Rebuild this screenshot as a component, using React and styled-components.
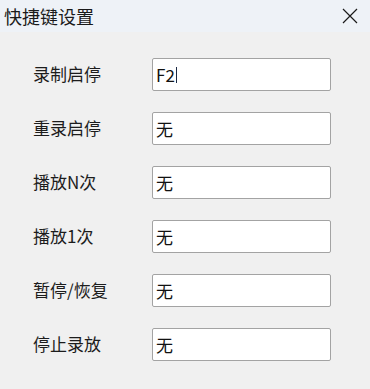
import React from "react";
import styled, { createGlobalStyle } from "styled-components";

const Global = createGlobalStyle`
  html, body {
    margin: 0;
    padding: 0;
    background: #f0f0f0;
  }
  body {
    font-family: "Noto Sans CJK SC", "Microsoft YaHei", sans-serif;
  }
`;

const Window = styled.div`
  width: 370px;
  height: 389px;
  background: #f0f0f0;
  display: flex;
  flex-direction: column;
  overflow: hidden;
`;

const TitleBar = styled.div`
  height: 32px;
  background: #eef2f7;
  display: flex;
  align-items: center;
  justify-content: space-between;
  padding: 0 0 0 4px;
  box-sizing: border-box;
`;

const Title = styled.div`
  font-size: 18px;
  color: #1a1a1a;
  line-height: 1;
  margin-top: -1px;
`;

const CloseBtn = styled.div`
  width: 40px;
  height: 32px;
  display: flex;
  align-items: center;
  justify-content: center;
`;

const Body = styled.div`
  display: grid;
  grid-template-columns: 119px 179px;
  grid-auto-rows: 33px;
  row-gap: 21px;
  padding: 26px 0 0 33px;
  align-items: center;
`;

const Label = styled.div`
  font-size: 17px;
  color: #1c1c1c;
  line-height: 1;
  margin-top: -2px;
`;

const Field = styled.div`
  height: 33px;
  box-sizing: border-box;
  background: #fff;
  border: 1px solid #a3a3a3;
  border-radius: 2px;
  display: flex;
  align-items: center;
  padding-left: 3px;
  font-size: 17px;
  color: #111;
  font-family: "Segoe UI", "Noto Sans CJK SC", sans-serif;
`;

const Caret = styled.span`
  display: inline-block;
  width: 1px;
  height: 16px;
  background: #1b2a44;
  margin-left: 1px;
`;

const rows = [
  { label: "录制启停", value: "F2", focus: true },
  { label: "重录启停", value: "无" },
  { label: "播放N次", value: "无" },
  { label: "播放1次", value: "无" },
  { label: "暂停/恢复", value: "无" },
  { label: "停止录放", value: "无" },
];

export default function App() {
  return (
    <Window>
      <Global />
      <TitleBar>
        <Title>快捷键设置</Title>
        <CloseBtn>
          <svg width="16" height="16" viewBox="0 0 16 16">
            <path d="M1 1 L15 15 M15 1 L1 15" stroke="#1a1a1a" strokeWidth="1.2" fill="none" />
          </svg>
        </CloseBtn>
      </TitleBar>
      <Body>
        {rows.map((r) => (
          <React.Fragment key={r.label}>
            <Label>{r.label}</Label>
            <Field>
              {r.value}
              {r.focus && <Caret />}
            </Field>
          </React.Fragment>
        ))}
      </Body>
    </Window>
  );
}
